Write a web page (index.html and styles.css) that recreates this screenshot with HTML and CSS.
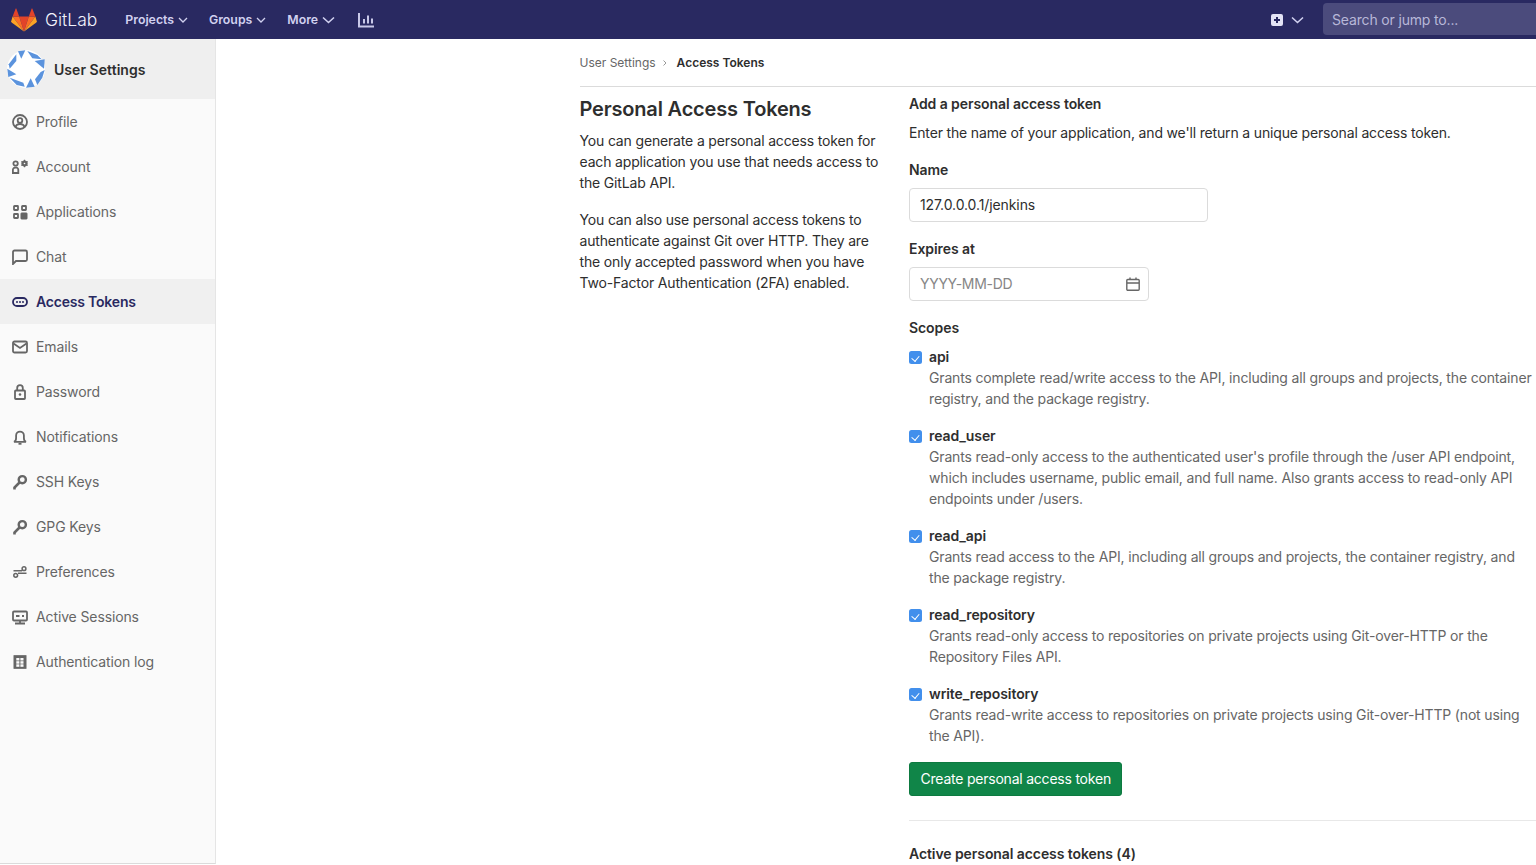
FILE: index.html
```html
<!DOCTYPE html>
<html lang="en">
<head>
    <meta charset="UTF-8">
    <meta name="viewport" content="width=device-width, initial-scale=1.0">
    <title>Personal Access Tokens</title>
    <link rel="stylesheet" href="styles.css">
</head>
<body>
    <header class="navbar">
        <a class="brand" href="#">
            <svg class="tanuki" width="26" height="24" viewBox="0 0 26 24">
                <polygon points="13,23.5 17.8,8.6 8.2,8.6" fill="#e24329"/>
                <polygon points="13,23.5 8.2,8.6 1.6,8.6" fill="#fc6d26"/>
                <polygon points="1.6,8.6 0.2,13.2 0.6,14.4 13,23.5" fill="#fca326"/>
                <polygon points="1.6,8.6 8.2,8.6 5.3,0.5 4.7,0.5" fill="#e24329"/>
                <polygon points="13,23.5 17.8,8.6 24.4,8.6" fill="#fc6d26"/>
                <polygon points="24.4,8.6 25.8,13.2 25.4,14.4 13,23.5" fill="#fca326"/>
                <polygon points="24.4,8.6 17.8,8.6 20.7,0.5 21.3,0.5" fill="#e24329"/>
            </svg>
            <span class="brand-name">GitLab</span>
        </a>
        <nav class="nav-links">
            <a class="nav-link" href="#">Projects <svg class="chev" width="10" height="10" viewBox="0 0 10 10"><path d="M1 3l4 4 4-4"/></svg></a>
            <a class="nav-link" href="#">Groups <svg class="chev" width="10" height="10" viewBox="0 0 10 10"><path d="M1 3l4 4 4-4"/></svg></a>
            <a class="nav-link" href="#">More <svg class="chev chev-big" width="13" height="10" viewBox="0 0 13 10"><path d="M1 2.500l5.500 5 5.500-5"/></svg></a>
            <a class="nav-stats" href="#">
                <svg width="17" height="16" viewBox="0 0 17 16"><path d="M1 1v13.500h15M6 7v4.500M10 3.500v8M14 6.500v5"/></svg>
            </a>
        </nav>
        <div class="nav-right">
            <a class="nav-new" href="#">
                <svg width="12" height="12" viewBox="0 0 12 12"><path fill="#e3e3f5" fill-rule="evenodd" d="M2 0h8a2 2 0 0 1 2 2v8a2 2 0 0 1-2 2H2a2 2 0 0 1-2-2V2a2 2 0 0 1 2-2zm3 3v2H3v2h2v2h2V7h2V5H7V3z"/></svg>
                <svg class="chev chev-big" width="13" height="10" viewBox="0 0 13 10"><path d="M1 2.500l5.500 5 5.500-5"/></svg>
            </a>
            <div class="search">Search or jump to...</div>
        </div>
    </header>

    <div class="layout">
        <aside class="sidebar">
            <div class="sidebar-head">
                <svg class="avatar" width="38" height="38" viewBox="0 0 38 38">
                    <circle cx="19" cy="19" r="19" fill="#fff"/>
                    <g fill="#5b93dd">
                        <polygon points="9.300,4.300 1.700,14.300 2.700,18.700 9.300,11"/>
                        <polygon points="11,1.300 18.300,.3 14.300,8.700"/>
                        <polygon points="20.300,1 30.300,5 34.700,9.300 25.300,8.300"/>
                        <polygon points="27.700,11 37.700,9.300 37,18.700"/>
                        <polygon points="37.700,20 35.300,27.700 30.300,35 28,29.300 33.700,22"/>
                        <polygon points="19,37.700 23.700,28.300 27.700,36.700"/>
                        <polygon points="2.700,27.700 16.300,32.700 17.700,36.700 9.700,35"/>
                        <polygon points=".3,18.700 9.300,24.300 1.300,27"/>
                    </g>
                </svg>
                <span class="sidebar-title">User Settings</span>
            </div>
            <ul class="side-menu">
                <li><a href="#"><svg viewBox="0 0 16 16"><circle cx="8" cy="8" r="7"/><circle cx="8" cy="6.500" r="2.300"/><path d="M3.500 13c.6-2 2.200-3 4.500-3s3.900 1 4.500 3"/></svg>Profile</a></li>
                <li><a href="#"><svg viewBox="0 0 16 16"><circle cx="3.600" cy="4.500" r="2.200"/><path d="M.9 14v-3.300a2 2 0 0 1 2-2h1.400a2 2 0 0 1 2 2V14z"/><circle class="fill" cx="12.500" cy="4.500" r="2.700"/><path class="thin" d="M12.500 .8v7.400M9.300 2.600l6.400 3.800M9.300 6.400l6.400-3.800"/><circle class="hole" cx="12.500" cy="4.500" r=".8"/></svg>Account</a></li>
                <li><a href="#"><svg viewBox="0 0 16 16"><rect x="2" y="2" width="4" height="4" rx=".5"/><rect x="10" y="2" width="4" height="4" rx=".5"/><rect x="2" y="10" width="4" height="4" rx=".5"/><rect class="fill" x="9" y="9" width="6" height="6" rx=".5"/></svg>Applications</a></li>
                <li><a href="#"><svg viewBox="0 0 16 16"><path d="M1 15V3a1.500 1.500 0 0 1 1.500-1.500h11A1.500 1.500 0 0 1 15 3v7.500a1.500 1.500 0 0 1-1.500 1.500H4z"/></svg>Chat</a></li>
                <li class="active"><a href="#"><svg viewBox="0 0 16 16"><rect x="1" y="4" width="14" height="8" rx="4"/><circle class="fill dot" cx="5" cy="8" r="1"/><circle class="fill dot" cx="8" cy="8" r="1"/><circle class="fill dot" cx="11" cy="8" r="1"/></svg>Access Tokens</a></li>
                <li><a href="#"><svg viewBox="0 0 16 16"><rect x="1" y="2.500" width="14" height="11" rx="1.500"/><path d="M1.500 4.500L8 9l6.500-4.500"/></svg>Emails</a></li>
                <li><a href="#"><svg viewBox="0 0 16 16"><rect x="3" y="6.500" width="10" height="8.500" rx=".8"/><path d="M5.200 6.500V4a2.800 2.800 0 0 1 5.600 0v2.500"/><circle class="fill dot" cx="8" cy="10.500" r="1.300"/></svg>Password</a></li>
                <li><a href="#"><svg viewBox="0 0 16 16"><path d="M2 12.800c1.500-.6 2.100-1.800 2.100-3.800V6.500a3.900 3.900 0 0 1 7.800 0V9c0 2 .6 3.200 2.100 3.800z"/><path d="M6.500 14.800h3"/></svg>Notifications</a></li>
                <li><a href="#"><svg viewBox="0 0 16 16"><circle class="ring" cx="10.300" cy="5.700" r="3.600"/><path class="heavy" d="M7.500 8.500L2.500 13.500V15.500"/></svg>SSH Keys</a></li>
                <li><a href="#"><svg viewBox="0 0 16 16"><circle class="ring" cx="10.300" cy="5.700" r="3.600"/><path class="heavy" d="M7.500 8.500L2.500 13.500V15.500"/></svg>GPG Keys</a></li>
                <li><a href="#"><svg viewBox="0 0 16 16"><path class="slim" d="M1.500 6.800h8.500M14.500 9.200H6"/><circle class="slim" cx="12" cy="4.700" r="1.900"/><circle class="slim" cx="3.700" cy="11.300" r="1.900"/></svg>Preferences</a></li>
                <li><a href="#"><svg viewBox="0 0 16 16"><rect x="1" y="2.500" width="14" height="9" rx="1"/><path d="M4 7h3.500M10 7h2M8 11.500v3M3 14.500h10"/></svg>Active Sessions</a></li>
                <li><a href="#"><svg viewBox="0 0 16 16"><rect class="fill" x="2" y="1.700" width="12" height="12.600"/><g class="cells"><rect x="4.300" y="4" width="3.100" height="2.500"/><rect x="8.400" y="4" width="3.100" height="2.500"/><rect x="4.300" y="7.200" width="3.100" height="2.500"/><rect x="8.400" y="7.200" width="3.100" height="2.500"/><rect x="4.300" y="10.300" width="3.100" height="2.500"/><rect x="8.400" y="10.300" width="3.100" height="2.500"/></g></svg>Authentication log</a></li>
            </ul>
        </aside>

        <main class="content">
            <div class="breadcrumbs">
                <a href="#">User Settings</a>
                <svg width="6" height="8" viewBox="0 0 6 8"><path d="M1.500 1.500L4 4 1.500 6.500"/></svg>
                <strong>Access Tokens</strong>
            </div>
            <div class="columns">
                <section class="intro">
                    <h1>Personal Access Tokens</h1>
                    <p>You can generate a personal access token for each application you use that needs access to the GitLab API.</p>
                    <p>You can also use personal access tokens to authenticate against Git over HTTP. They are the only accepted password when you have Two-Factor Authentication (2FA) enabled.</p>
                </section>
                <section class="token-form">
                    <h2>Add a personal access token</h2>
                    <p class="lead">Enter the name of your application, and we'll return a unique personal access token.</p>
                    <form>
                        <label class="field-label" for="name">Name</label>
                        <input class="field field-name" id="name" type="text" value="127.0.0.0.1/jenkins">
                        <label class="field-label" for="expires">Expires at</label>
                        <div class="date-wrap">
                            <input class="field" id="expires" type="text" placeholder="YYYY-MM-DD">
                            <svg class="date-icon" width="14" height="14" viewBox="0 0 14 14"><path d="M1.800 2.500h10.400a1 1 0 0 1 1 1v8.700a1 1 0 0 1-1 1H1.800a1 1 0 0 1-1-1V3.500a1 1 0 0 1 1-1zM1 6h12M4 .5v2M10 .5v2"/></svg>
                        </div>
                        <div class="field-label scopes-label">Scopes</div>
                        <div class="scope">
                            <input type="checkbox" id="api" checked>
                            <label for="api">api</label>
                            <p>Grants complete read/write access to the API, including all groups and projects, the container registry, and the package registry.</p>
                        </div>
                        <div class="scope">
                            <input type="checkbox" id="read_user" checked>
                            <label for="read_user">read_user</label>
                            <p>Grants read-only access to the authenticated user's profile through the /user API endpoint, which includes username, public email, and full name. Also grants access to read-only API endpoints under /users.</p>
                        </div>
                        <div class="scope">
                            <input type="checkbox" id="read_api" checked>
                            <label for="read_api">read_api</label>
                            <p>Grants read access to the API, including all groups and projects, the container registry, and the package registry.</p>
                        </div>
                        <div class="scope">
                            <input type="checkbox" id="read_repository" checked>
                            <label for="read_repository">read_repository</label>
                            <p>Grants read-only access to repositories on private projects using Git-over-HTTP or the Repository Files API.</p>
                        </div>
                        <div class="scope">
                            <input type="checkbox" id="write_repository" checked>
                            <label for="write_repository">write_repository</label>
                            <p>Grants read-write access to repositories on private projects using Git-over-HTTP (not using the API).</p>
                        </div>
                        <button type="submit">Create personal access token</button>
                    </form>
                    <hr>
                    <h3>Active personal access tokens (4)</h3>
                </section>
            </div>
        </main>
    </div>
</body>
</html>
```

FILE: styles.css
```css
* {
    box-sizing: border-box;
}
html, body {
    height: 100%;
}
body {
    margin: 0;
    overflow: hidden;
    font-family: Inter, "Noto Sans", sans-serif;
    font-size: 14px;
    line-height: 21px;
    letter-spacing: -0.16px;
    color: #2e2e2e;
    background: #fff;
}
a {
    color: inherit;
    text-decoration: none;
}

/* top bar */
.navbar {
    display: flex;
    align-items: center;
    height: 39px;
    background: #292961;
    color: #d1d1f0;
}
.brand {
    display: flex;
    align-items: center;
    margin-left: 11px;
    color: #fff;
}
.brand-name {
    margin-left: 8px;
    font-size: 17.5px;
    font-weight: 300;
    letter-spacing: 0;
    color: #f2f2fb;
}
.nav-links {
    display: flex;
    align-items: center;
    margin-left: 28px;
}
.nav-link {
    display: flex;
    align-items: center;
    gap: 4px;
    margin-right: 21px;
    font-size: 12.3px;
    font-weight: 600;
    letter-spacing: 0;
}
.chev {
    fill: none;
    stroke: #d1d1f0;
    stroke-width: 1.300;
}
.chev-big {
    stroke-width: 1.600;
}
.nav-stats {
    margin-left: 2px;
}
.nav-stats svg {
    display: block;
    fill: none;
    stroke: #c8c8e8;
    stroke-width: 2;
}
.nav-right {
    display: flex;
    align-items: center;
    margin-left: auto;
}
.nav-new {
    display: flex;
    align-items: center;
    gap: 8px;
    margin-right: 19px;
}
.search {
    width: 213px;
    height: 32px;
    margin-bottom: 1px;
    padding: 0 9px;
    border-radius: 4px 0 0 4px;
    background: #4b4b7c;
    color: #b8b8d8;
    font-size: 14px;
    line-height: 33px;
}

/* sidebar */
.layout {
    display: flex;
    align-items: flex-start;
}
.sidebar {
    flex: 0 0 216px;
    height: 825px;
    background: #fafafa;
    border-right: 1px solid #e5e5e5;
    border-bottom: 1px solid #dbdbdb;
}
.sidebar-head {
    display: flex;
    align-items: center;
    height: 60px;
    padding-left: 7px;
    background: #efefef;
}
.avatar {
    flex: none;
}
.sidebar-title {
    margin-left: 9px;
    font-weight: 600;
    letter-spacing: 0.05px;
}
.side-menu {
    margin: 0;
    padding: 0;
    list-style: none;
}
.side-menu a {
    display: flex;
    align-items: center;
    height: 45px;
    padding-left: 12px;
    color: #666;
    letter-spacing: -0.12px;
}
.side-menu svg {
    flex: none;
    width: 16px;
    height: 16px;
    margin-right: 8px;
    fill: none;
    stroke: currentColor;
    stroke-width: 1.800;
}
.side-menu .fill {
    fill: currentColor;
    stroke-width: 1;
}
.side-menu .dot {
    stroke: none;
}
.side-menu .thin {
    stroke-width: 1.200;
}
.side-menu .slim {
    stroke-width: 1.500;
}
.side-menu .ring {
    stroke-width: 2.400;
}
.side-menu .heavy {
    stroke-width: 2.600;
}
.side-menu .hole {
    fill: #fafafa;
    stroke: none;
}
.side-menu .cells {
    fill: #fafafa;
    stroke: none;
}
.side-menu .active {
    background: #f0f0f0;
}
.side-menu .active a {
    color: #292961;
    font-weight: 600;
    letter-spacing: -0.2px;
}

/* main content */
.content {
    flex: 1;
    min-width: 0;
    padding-left: 363.500px;
}
.breadcrumbs {
    display: flex;
    align-items: center;
    height: 48px;
    border-bottom: 1px solid #dbdbdb;
    font-size: 12px;
    letter-spacing: 0;
    color: #666;
}
.breadcrumbs svg {
    margin: 0 8.500px 0 6.500px;
    fill: none;
    stroke: #999;
}
.breadcrumbs strong {
    color: #2e2e2e;
    font-weight: 600;
}
.columns {
    display: flex;
    padding-top: 6px;
}
.intro {
    flex: 0 0 329.500px;
    padding: 1px 29px 0 0;
}
.intro h1 {
    margin: 0 0 6px;
    font-size: 20px;
    line-height: 30px;
    font-weight: 600;
    letter-spacing: -0.18px;
}
.intro p {
    margin: 0 0 16px;
}
.token-form {
    flex: 0 0 630px;
}
.token-form h2 {
    margin: 0;
    font-size: 14px;
    line-height: 21px;
    font-weight: 600;
    letter-spacing: -0.08px;
}
.lead {
    margin: 8px 0 16px;
}
.field-label {
    display: block;
    margin-bottom: 8px;
    font-weight: 600;
    letter-spacing: -0.08px;
}
.field {
    display: block;
    width: 240px;
    height: 34px;
    margin-bottom: 16px;
    padding: 0 10px 2px;
    border: 1px solid #dbdbdb;
    border-radius: 4px;
    font: inherit;
    letter-spacing: -0.1px;
    color: #2e2e2e;
}
.field::placeholder {
    color: #868686;
    letter-spacing: -0.3px;
}
.field-name {
    width: 299px;
}
.date-wrap {
    position: relative;
    width: 240px;
}
.date-icon {
    position: absolute;
    top: 10px;
    right: 9px;
    fill: none;
    stroke: #666;
    stroke-width: 1.400;
}
.scopes-label {
    margin-top: 16px;
}
.scope {
    position: relative;
    margin-bottom: 16px;
    padding-left: 20px;
}
.scope input {
    position: absolute;
    top: 5px;
    left: 0;
    width: 12.500px;
    height: 12.500px;
    margin: 0;
    appearance: none;
    border-radius: 2.500px;
    background: #428fec;
}
.scope input::before {
    content: "";
    position: absolute;
    top: 2.500px;
    left: 4.300px;
    width: 3.500px;
    height: 6px;
    border: solid #fff;
    border-width: 0 1.500px 1.500px 0;
    transform: rotate(40deg);
}
.scope label {
    font-weight: 600;
    letter-spacing: -0.08px;
}
.scope p {
    margin: 0;
    color: #666;
}
button {
    display: block;
    height: 34px;
    padding: 0 10.500px 2px;
    border: 1px solid #0d7a40;
    border-radius: 3px;
    background: #108548;
    color: #fff;
    font: inherit;
    letter-spacing: -0.22px;
    cursor: pointer;
}
hr {
    height: 1px;
    margin: 24px 0 22px;
    border: 0;
    background: #e8e8e8;
}
h3 {
    margin: 0;
    font-size: 14px;
    line-height: 21px;
    font-weight: 600;
    letter-spacing: -0.08px;
}
```
